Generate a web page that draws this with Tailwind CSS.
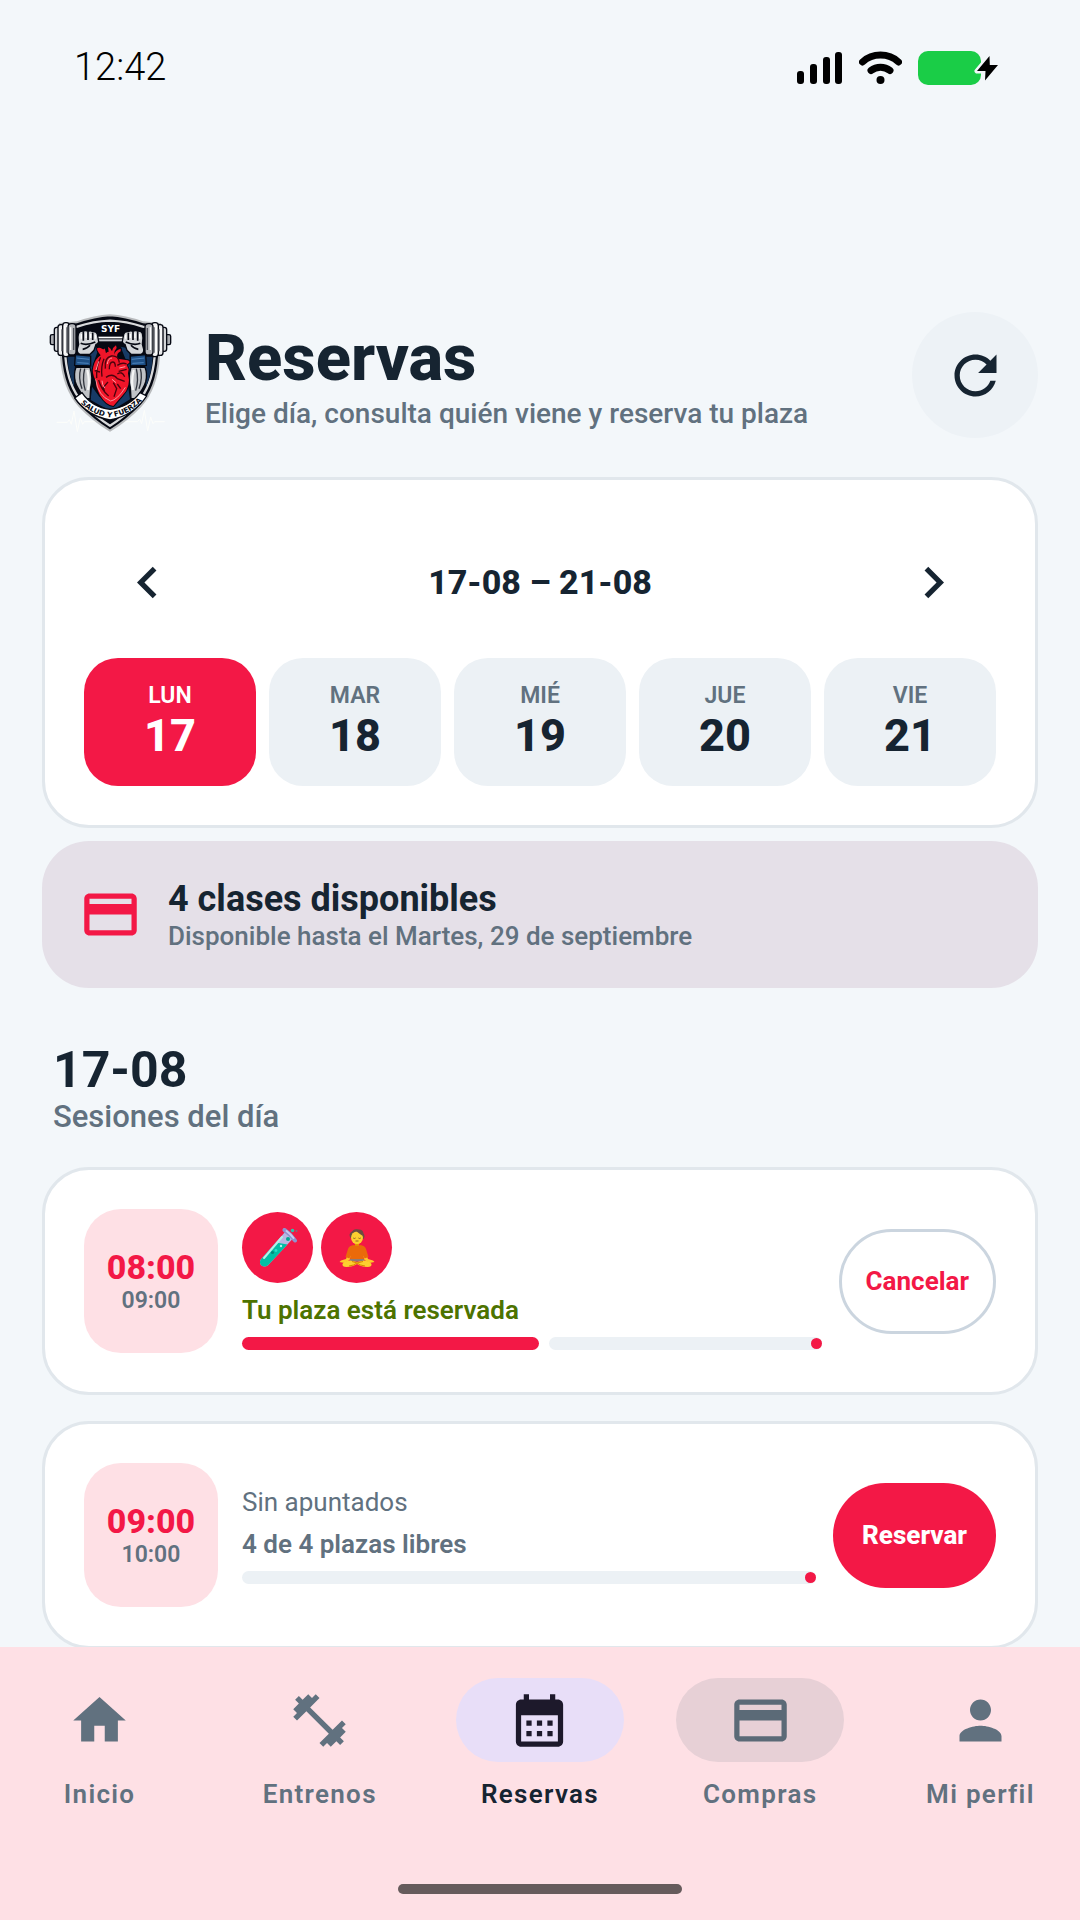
<!DOCTYPE html>
<html lang="es">
<head>
    <meta charset="UTF-8">
    <meta name="viewport" content="width=device-width, initial-scale=1.0">
    <title>Reservas</title>
    <script src="https://cdn.jsdelivr.net/npm/@tailwindcss/browser@4"></script>
</head>
<body class="h-screen flex flex-col overflow-hidden bg-[#f3f7fa] font-[Roboto,sans-serif] text-[#162431]">

    <!-- status bar -->
    <div class="h-[135px] shrink-0 flex items-center justify-between pl-[74px] pr-[80px] text-black">
        <span class="text-[38px] font-light">12:42</span>
        <div class="flex items-center gap-4">
            <svg class="w-[46px] h-[34px]" viewBox="0 0 46 34" fill="currentColor">
                <rect x="0" y="20" width="7" height="13" rx="3"/>
                <rect x="13" y="13" width="7" height="20" rx="3"/>
                <rect x="26" y="6" width="7" height="27" rx="3"/>
                <rect x="38" y="1" width="7" height="32" rx="3"/>
            </svg>
            <svg class="w-[43px] h-[34px]" viewBox="0 0 43 34">
                <path d="M3.500 11C13.500 1.800 29.500 1.800 39.500 11" fill="none" stroke="#000" stroke-width="7" stroke-linecap="round"/>
                <path d="M12 19.500C17.500 15 25.500 15 31 19.500" fill="none" stroke="#000" stroke-width="7" stroke-linecap="round"/>
                <ellipse cx="21.500" cy="29" rx="4" ry="4"/>
            </svg>
            <svg class="w-[82px] h-[34px]" viewBox="0 0 82 34">
                <rect x="0" y="0" width="63" height="34" rx="10" fill="#1acd47"/>
                <path d="M71.500 5L59 20h8.500L67 29.500 80 14h-8.200z" fill="#000" stroke="#f3f7fa" stroke-width="5" paint-order="stroke" stroke-linejoin="round"/>
            </svg>
        </div>
    </div>

    <main class="min-h-0 flex-1 overflow-hidden px-[42px] pt-[172px]">
        <header class="flex items-center gap-[27px]">
            <svg class="size-[136px] shrink-0" viewBox="36 51 408 408" role="img" aria-label="Salud y Fuerza">
                <!-- pulse -->
                <path d="M80 397h32l6-8 6 14 8-40 10 62 9-42 7 20 5-8h160l6-8 6 14 8-40 10 62 9-42 7 20 5-6h30" fill="none" stroke="#fdfefb" stroke-width="3"/>
                <!-- shield -->
                <path d="M240 76Q285 79 340 97L390 102L387 200Q380 296 332 348Q290 392 240 422Q190 392 148 348Q100 296 93 200L90 102L140 97Q195 79 240 76Z" fill="#060913" stroke="#b9bbbd" stroke-width="6"/>
                <path d="M240 92Q290 94 338 110L374 115L374 200Q366 290 322 338Q286 378 240 407Q194 378 158 338Q114 290 106 200L106 115L142 110Q190 94 240 92Z" fill="#060913" stroke="#d9dadc" stroke-width="7"/>
                <path d="M112 200h24l-4 90q-17-40-20-90zM368 200h-24l4 90q17-40 20-90z" fill="#14335a"/>
                <path d="M186 175l22-5-22 62zM294 175l-22-5 24 62zM186 290l22 30 32 20 34-20 20-32 6 40-58 36-60-34z" fill="#173b66"/>
                <path d="M180 178l12 10-4 58-8 20zM298 178l-12 10 8 58 8 20z" fill="#173b66"/>
                <text x="242" y="126" text-anchor="middle" font-family="DejaVu Sans, sans-serif" font-weight="700" font-size="27" fill="#fff">SYF</text>
                <!-- bar -->
                <rect x="196" y="134" width="90" height="26" fill="#060913"/>
                <rect x="200" y="140" width="82" height="5" fill="#fff"/>
                <rect x="200" y="148" width="82" height="6" fill="#c9ccd2"/>
                <!-- left arm, drawn once and mirrored -->
                <g id="arm">
                    <g stroke="#060913" stroke-width="4">
                        <rect x="61" y="134" width="18" height="30" rx="5" fill="#a9abaf"/>
                        <rect x="73" y="112" width="16" height="72" rx="7" fill="#d5d6d8"/>
                        <rect x="84" y="104" width="18" height="92" rx="8" fill="#e9eaeb"/>
                        <rect x="98" y="98" width="20" height="102" rx="9" fill="#f4f4f4"/>
                        <rect x="114" y="101" width="24" height="94" rx="10" fill="#b4b6ba"/>
                        <path d="M146 130q4-8 14-6 6-5 14 0 8-4 14 1 12-1 14 8l4 22q-2 8-8 8l-6 18-12 12h-30q-10-4-8-16l4-14q-4-20 0-33z" fill="#d4d6d9"/>
                        <path d="M136 194l46 4v30l-48-2z" fill="#1e4f85"/>
                        <path d="M138 232l42 0q10 34 2 60l-2 34-14 0q-24-30-30-50-6-24 2-44z" fill="#c0c2c6"/>
                    </g>
                    <path d="M90 114v70M104 108v80M122 112v68" stroke="#fff" stroke-width="4"/>
                    <path d="M96 118v66M111 112v76M131 114v66" stroke="#4c4f57" stroke-width="4"/>
                    <path d="M160 126v26M174 126v24M188 128v22M152 160q18 8 44-4M158 178q14-2 22-12" fill="none" stroke="#060913" stroke-width="5"/>
                    <path d="M154 132v14M168 130v14M182 132v12M196 134v12" stroke="#fff" stroke-width="4"/>
                    <path d="M140 204l38 4M142 218l34 2" stroke="#4f86bf" stroke-width="3"/>
                    <path d="M152 236q-8 28 4 60M164 236q-8 34 2 66" fill="none" stroke="#31353e" stroke-width="4"/>
                    <path d="M172 240q8 34 2 60" fill="none" stroke="#f6f6f6" stroke-width="7"/>
                </g>
                <use href="#arm" transform="matrix(-1 0 0 1 483 0)"/>
                <!-- heart -->
                <path d="M212 196q-14-18-10-22 8-2 14 2 8 4 8-2l4 16q4-6 8-4l-2-16q8 4 12 14 2-12 12-18l2 8q-8 8-8 20 4-14 20-18v8q-14 6-10 22l26 4q12 0 10 8l-8 6 6 14-2 12q10 40-16 66l-28 32q-22-2-40-32-14-28-12-42-14-26-8-44 6-24 22-34z" fill="#f01529" stroke="#060913" stroke-width="6" paint-order="stroke"/>
                <path d="M226 236q-4-34 18-38 22-2 24 20M238 238q0-22 10-22 8 0 8 14M212 202q-14 26-12 62M222 206q-10 24-6 54M262 226q14-10 28-4M266 244l24-6M262 252q14-10 22 8M228 262q20-14 34 4l22 8M234 276l-14 16 4 14M250 278l10 18-8 24M262 282l10 14M206 270q8 30 30 48M194 242l16 4" fill="none" stroke="#4a030d" stroke-width="4"/>
                <path d="M232 222q2-18 14-18M206 214l-8 26M268 234l18-4M216 272q0 12 8 22M246 268l12 10" fill="none" stroke="#ff9aa2" stroke-width="3"/>
                <path d="M197 268Q204 318 242 333Q262 330 286 292" fill="none" stroke="#f7d7da" stroke-width="2"/>
                <!-- ribbon -->
                <path d="M134 324L156 308Q186 352 240 358Q296 352 330 308L350 318Q312 376 240 390Q172 378 134 324Z" fill="#fff" stroke="#060913" stroke-width="4"/>
                <path id="ribbon" d="M140 326Q180 376 240 382Q304 376 348 318" fill="none"/>
                <text font-family="DejaVu Sans, sans-serif" font-weight="700" font-size="22" fill="#060913"><textPath href="#ribbon" startOffset="50%" text-anchor="middle">SALUD Y FUERZA</textPath></text>
            </svg>
            <div class="flex-1">
                <h1 class="text-[65px] leading-[76px] font-extrabold">Reservas</h1>
                <p class="text-[28px] leading-[35px] font-medium text-[#61717f]">Elige día, consulta quién viene y reserva tu plaza</p>
            </div>
            <button type="button" aria-label="Actualizar" class="size-[126px] rounded-full bg-[#edf2f6] flex items-center justify-center">
                <svg class="size-[63px]" viewBox="0 0 24 24" fill="currentColor"><path d="M17.650 6.350C16.200 4.900 14.210 4 12 4c-4.420 0-7.990 3.580-7.990 8s3.570 8 7.990 8c3.730 0 6.840-2.550 7.730-6h-2.080c-.82 2.330-3.040 4-5.650 4-3.310 0-6-2.690-6-6s2.690-6 6-6c1.660 0 3.140.69 4.220 1.780L13 11h7V4l-2.350 2.350z"/></svg>
            </button>
        </header>

        <!-- week -->
        <section class="mt-[34px] rounded-[47px] border-3 border-[#e1e7ec] bg-white p-[39px]">
            <div class="flex items-center justify-between">
                <button type="button" aria-label="Semana anterior" class="size-[126px] flex items-center justify-center">
                    <svg class="size-[63px]" viewBox="0 0 24 24" fill="currentColor"><path d="M15.410 7.410L14 6l-6 6 6 6 1.410-1.410L10.830 12z"/></svg>
                </button>
                <h2 class="text-[34px] leading-[40px] font-extrabold">17-08 – 21-08</h2>
                <button type="button" aria-label="Semana siguiente" class="size-[126px] flex items-center justify-center">
                    <svg class="size-[63px]" viewBox="0 0 24 24" fill="currentColor"><path d="M10 6L8.590 7.410 13.170 12l-4.580 4.590L10 18l6-6z"/></svg>
                </button>
            </div>
            <div class="mt-[13px] grid grid-cols-5 gap-[13px]">
                <button type="button" class="h-[128px] rounded-[34px] bg-[#f31846] text-white flex flex-col items-center justify-center">
                    <span class="text-[23px] leading-[28px] font-semibold">LUN</span>
                    <span class="text-[45px] leading-[52px] font-extrabold">17</span>
                </button>
                <button type="button" class="h-[128px] rounded-[34px] bg-[#ecf1f5] flex flex-col items-center justify-center">
                    <span class="text-[23px] leading-[28px] font-semibold text-[#61717f]">MAR</span>
                    <span class="text-[45px] leading-[52px] font-extrabold">18</span>
                </button>
                <button type="button" class="h-[128px] rounded-[34px] bg-[#ecf1f5] flex flex-col items-center justify-center">
                    <span class="text-[23px] leading-[28px] font-semibold text-[#61717f]">MIÉ</span>
                    <span class="text-[45px] leading-[52px] font-extrabold">19</span>
                </button>
                <button type="button" class="h-[128px] rounded-[34px] bg-[#ecf1f5] flex flex-col items-center justify-center">
                    <span class="text-[23px] leading-[28px] font-semibold text-[#61717f]">JUE</span>
                    <span class="text-[45px] leading-[52px] font-extrabold">20</span>
                </button>
                <button type="button" class="h-[128px] rounded-[34px] bg-[#ecf1f5] flex flex-col items-center justify-center">
                    <span class="text-[23px] leading-[28px] font-semibold text-[#61717f]">VIE</span>
                    <span class="text-[45px] leading-[52px] font-extrabold">21</span>
                </button>
            </div>
        </section>

        <!-- bono -->
        <section class="mt-[13px] rounded-[47px] bg-[#e5e0e8] p-[37px] flex items-center gap-[26px]">
            <svg class="size-[63px] text-[#f31846]" viewBox="0 0 24 24" fill="currentColor"><path d="M20 4H4c-1.110 0-1.990.89-1.990 2L2 18c0 1.110.89 2 2 2h16c1.110 0 2-.89 2-2V6c0-1.110-.89-2-2-2zm0 14H4v-6h16v6zm0-10H4V6h16v2z"/></svg>
            <div>
                <h2 class="text-[36px] leading-[43px] font-bold">4 clases disponibles</h2>
                <p class="text-[26px] leading-[30px] font-medium text-[#61717f]">Disponible hasta el Martes, 29 de septiembre</p>
            </div>
        </section>

        <div class="mt-[54px] mb-[31px] pl-[11px]">
            <h2 class="text-[50px] leading-[56px] font-bold">17-08</h2>
            <p class="text-[31px] leading-[38px] font-medium text-[#61717f]">Sesiones del día</p>
        </div>

        <div class="flex flex-col gap-[26px]">
            <article class="rounded-[47px] border-3 border-[#e1e7ec] bg-white p-[39px] flex items-center">
                <div class="w-[134px] h-[144px] shrink-0 rounded-[37px] bg-[#fee0e5] flex flex-col items-center justify-center">
                    <span class="text-[34px] leading-[40px] font-extrabold text-[#f31846]">08:00</span>
                    <span class="text-[23px] leading-[28px] font-semibold text-[#61717f]">09:00</span>
                </div>
                <div class="ml-6 mr-[17px] flex-1 flex flex-col gap-3">
                    <div class="flex gap-2">
                        <span class="size-[71px] rounded-full bg-[#f31846] flex items-center justify-center">
                            <svg class="size-10" viewBox="0 0 40 40">
                                <path d="M27.500 3.500L2.800 31.500q-2 3.500.7 6 3 2.300 6.500-.2L34.500 11z" fill="#b8b6e2"/>
                                <path d="M18 14.500L2.800 31.500q-2 3.500.7 6 3 2.300 6.500-.2L29.500 16.500z" fill="#00bfa5"/>
                                <path d="M24 9L6 30" stroke="#b5efe8" stroke-width="2" stroke-linecap="round"/>
                                <path d="M26.500 2Q33 6.500 37 12.500" fill="none" stroke="#8f93cf" stroke-width="4" stroke-linecap="round"/>
                                <path d="M28.500 3Q33 6.500 35.500 10" fill="none" stroke="#c9cbf0" stroke-width="2" stroke-linecap="round"/>
                                <circle cx="30" cy="11" r="2" fill="#00a992"/>
                                <circle cx="23" cy="18" r="1.200" fill="#b5efe8"/>
                                <circle cx="18" cy="22.500" r="1.400" fill="#26e0c8"/>
                                <circle cx="14.500" cy="24.500" r="1.600" fill="#00897b"/>
                                <circle cx="34.500" cy="2.500" r="1.800" fill="#26c6b0"/>
                                <circle cx="38.500" cy="3" r="1" fill="#7d6f7c"/>
                            </svg>
                        </span>
                        <span class="size-[71px] rounded-full bg-[#f31846] flex items-center justify-center">
                            <svg class="size-10" viewBox="0 0 40 40">
                                <path d="M13.500 10Q11 5.500 15 3.500 17 .5 21 1.500 26 1 26.500 5.500 28.500 8 26.500 11z" fill="#6d4c41"/>
                                <path d="M18 14h4v5h-4z" fill="#e59600"/>
                                <ellipse cx="20" cy="9.800" rx="6" ry="6.300" fill="#fdd02f"/>
                                <path d="M14 8q0-5 5-5 5 4 7 5-1-6-6-6.500-6 .5-6 6.500z" fill="#6d4c41"/>
                                <path d="M16.200 10q1.200 1 2.400 0M21.400 10q1.200 1 2.400 0M18.500 13h3" fill="none" stroke="#7a4a20" stroke-width=".8"/>
                                <path d="M12 23l-3 8-5 1.500-1.500 1.500 5 1 5-3 3-7zM28 23l3 8 5 1.500 1.500 1.500-5 1-5-3-3-7z" fill="#fdc82b"/>
                                <path d="M17 17q3 1.500 6 0 5 .5 6 4l2.500 8-4 1.500-1-3 .5 5H13l.5-5-1 3-4-1.500L11 21q1-3.500 6-4z" fill="#ea6a0a"/>
                                <path d="M13 31h14v2.500H13z" fill="#8d7b77"/>
                                <path d="M13 32.500q-6 .5-7.500 3.500-.5 3 4 3 6 0 10.500-3 4.500 3 10.500 3 4.500 0 4-3-1.500-3-7.500-3.500l-7 1.500z" fill="#fdd02f"/>
                                <path d="M12 38q5-.5 8-3l6-1.500M28 38q-5-.5-8-3l-5-1.500" fill="none" stroke="#d98a00" stroke-width="1"/>
                            </svg>
                        </span>
                    </div>
                    <p class="text-[26px] leading-[30px] font-semibold text-[#4d7300]">Tu plaza está reservada</p>
                    <div role="progressbar" aria-label="Ocupación" aria-valuenow="50" aria-valuemin="0" aria-valuemax="100" class="flex h-[13px] gap-[10px]">
                        <div class="rounded-full bg-[#f31846]" style="width: 51.2%"></div>
                        <div class="flex-1 rounded-full bg-[#ecf1f5] flex items-center justify-end"><i class="size-[11px] rounded-full bg-[#f31846]"></i></div>
                    </div>
                </div>
                <button type="button" class="h-[105px] px-6 rounded-full border-3 border-[#cbd5df] text-[26px] leading-[30px] font-bold text-[#f31846]">Cancelar</button>
            </article>

            <article class="rounded-[47px] border-3 border-[#e1e7ec] bg-white p-[39px] flex items-center">
                <div class="w-[134px] h-[144px] shrink-0 rounded-[37px] bg-[#fee0e5] flex flex-col items-center justify-center">
                    <span class="text-[34px] leading-[40px] font-extrabold text-[#f31846]">09:00</span>
                    <span class="text-[23px] leading-[28px] font-semibold text-[#61717f]">10:00</span>
                </div>
                <div class="ml-6 mr-[17px] flex-1 flex flex-col gap-3">
                    <p class="text-[26px] leading-[30px] text-[#61717f]">Sin apuntados</p>
                    <p class="text-[26px] leading-[30px] font-semibold text-[#61717f]">4 de 4 plazas libres</p>
                    <div role="progressbar" aria-label="Ocupación" aria-valuenow="0" aria-valuemin="0" aria-valuemax="100" class="flex h-[13px]">
                        <div class="flex-1 rounded-full bg-[#ecf1f5] flex items-center justify-end"><i class="size-[11px] rounded-full bg-[#f31846]"></i></div>
                    </div>
                </div>
                <button type="button" class="h-[105px] px-[29px] rounded-full bg-[#f31846] text-[26px] leading-[30px] font-extrabold text-white">Reservar</button>
            </article>
        </div>
    </main>

    <nav class="h-[273px] shrink-0 bg-[#fee0e5] pt-[31px] pb-[26px] flex flex-col items-center justify-between">
        <div class="w-full grid grid-cols-5 gap-[21px] text-[26px] leading-[30px] font-semibold tracking-wider text-[#61717f]">
            <a href="#inicio" class="flex flex-col items-center gap-[17px]">
                <span class="w-[168px] h-[84px] rounded-full flex items-center justify-center">
                    <svg class="size-[63px]" viewBox="0 0 24 24" fill="currentColor"><path d="M10 20v-6h4v6h5v-8h3L12 3 2 12h3v8z"/></svg>
                </span>
                Inicio
            </a>
            <a href="#entrenos" class="flex flex-col items-center gap-[17px]">
                <span class="w-[168px] h-[84px] rounded-full flex items-center justify-center">
                    <svg class="size-[63px]" viewBox="0 0 24 24" fill="currentColor"><path d="M20.570 14.860L22 13.430 20.570 12 17 15.570 8.430 7 12 3.430 10.570 2 9.140 3.430 7.710 2 5.570 4.140 4.140 2.710 2.710 4.140l1.430 1.430L2 7.710l1.430 1.430L2 10.570 3.430 12 7 8.430 15.570 17 12 20.570 13.430 22l1.430-1.430L16.290 22l2.140-2.140 1.430 1.430 1.430-1.430-1.430-1.430L22 16.290z"/></svg>
                </span>
                Entrenos
            </a>
            <a href="#reservas" aria-current="page" class="flex flex-col items-center gap-[17px] text-[#162431]">
                <span class="w-[168px] h-[84px] rounded-full bg-[#e8def8] text-[#1d192b] flex items-center justify-center">
                    <svg class="size-[63px]" viewBox="0 0 24 24" fill="currentColor"><path d="M19 4h-1V2h-2v2H8V2H6v2H5c-1.110 0-1.990.9-1.990 2L3 20c0 1.100.89 2 2 2h14c1.100 0 2-.9 2-2V6c0-1.100-.9-2-2-2zm0 16H5V10h14v10zM9 14H7v-2h2v2zm4 0h-2v-2h2v2zm4 0h-2v-2h2v2zm-8 4H7v-2h2v2zm4 0h-2v-2h2v2zm4 0h-2v-2h2v2z"/></svg>
                </span>
                Reservas
            </a>
            <a href="#compras" class="flex flex-col items-center gap-[17px]">
                <span class="w-[168px] h-[84px] rounded-full bg-[#e7d0d6] text-[#5b6a77] flex items-center justify-center">
                    <svg class="size-[63px]" viewBox="0 0 24 24" fill="currentColor"><path d="M20 4H4c-1.110 0-1.990.89-1.990 2L2 18c0 1.110.89 2 2 2h16c1.110 0 2-.89 2-2V6c0-1.110-.89-2-2-2zm0 14H4v-6h16v6zm0-10H4V6h16v2z"/></svg>
                </span>
                Compras
            </a>
            <a href="#perfil" class="flex flex-col items-center gap-[17px]">
                <span class="w-[168px] h-[84px] rounded-full flex items-center justify-center">
                    <svg class="size-[63px]" viewBox="0 0 24 24" fill="currentColor"><path d="M12 12c2.210 0 4-1.790 4-4s-1.790-4-4-4-4 1.790-4 4 1.790 4 4 4zm0 2c-2.670 0-8 1.340-8 4v2h16v-2c0-2.660-5.330-4-8-4z"/></svg>
                </span>
                Mi perfil
            </a>
        </div>
        <div class="w-[284px] h-[10px] rounded-full bg-[#665b5c]"></div>
    </nav>
</body>
</html>
